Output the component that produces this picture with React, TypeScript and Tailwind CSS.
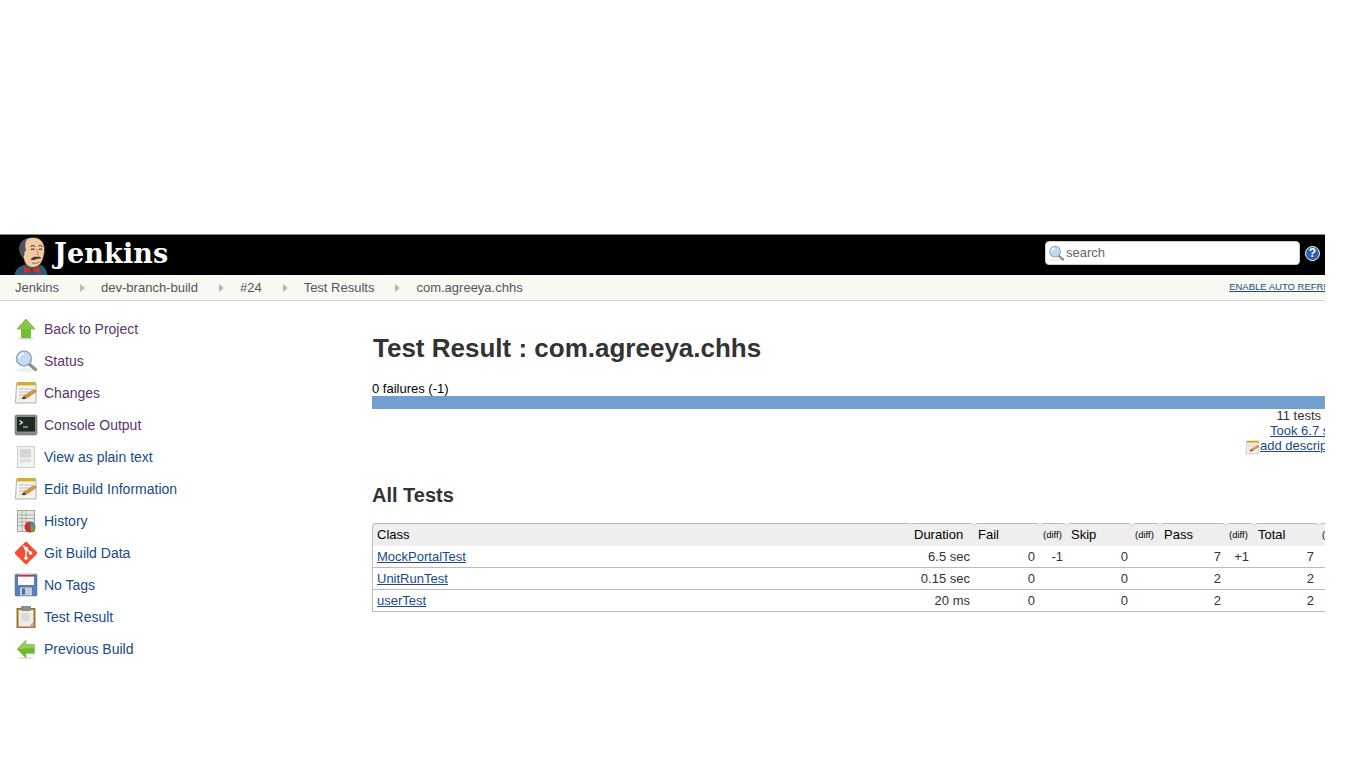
const visited = "text-[#5c3566]";
const link = "text-[#204a87]";

function ArrowUp() {
  return (
    <svg width="24" height="24" viewBox="0 0 24 24">
      <ellipse cx="12" cy="21.5" rx="8" ry="1.5" fill="#ddd" />
      <path d="M12 2 21 12H16.5V20.5H7.5V12H3Z" fill="#73c02e" stroke="#5a9a1e" strokeWidth="0.6" />
      <path d="M12 2 21 12H3Z" fill="#8ac44a" />
    </svg>
  );
}

function ArrowLeft() {
  return (
    <svg width="24" height="24" viewBox="0 0 24 24">
      <ellipse cx="12" cy="21" rx="8" ry="1.5" fill="#e4e4e4" />
      <path d="M3 12 12 3V7.5H20.5V16.5H12V21Z" fill="#72b52f" stroke="#8fc05f" strokeWidth="0.6" />
      <path d="M3 12 12 3V7.5H20.5V11Z" fill="#96cb5c" />
    </svg>
  );
}

function Magnifier({ size = 24 }: { size?: number }) {
  return (
    <svg width={size} height={size} viewBox="0 0 24 24">
      <ellipse cx="11" cy="21" rx="9" ry="2" fill="#eee" />
      <path d="M15 15 21.5 20.5" stroke="#8d8d8d" strokeWidth="3.2" strokeLinecap="round" />
      <circle cx="10" cy="9.5" r="7.5" fill="#c4daf2" stroke="#9aa9b8" strokeWidth="1.6" />
      <path d="M5 9a5 5 0 0 1 5-4.5" stroke="#fff" strokeWidth="1.6" fill="none" />
    </svg>
  );
}

function Notepad({ size = 24 }: { size?: number }) {
  return (
    <svg width={size} height={size} viewBox="0 0 24 24">
      <path d="M2.5 2.5H22V22H1.5Z" fill="#f3f3f0" stroke="#a8a8a3" strokeWidth="0.9" />
      <rect x="3" y="1" width="18.5" height="3.4" fill="#d9a92e" />
      <path d="M5 8H19M5 11H16M5 14H12M5 17H10" stroke="#c4c4c4" strokeWidth="1" />
      <path d="M8 18 10 15 20 8.5 22.5 10.5 12 17.5Z" fill="#e09a32" stroke="#8a5a1a" strokeWidth="0.5" />
      <path d="M8 18 10 15 12 17.5Z" fill="#40352a" />
    </svg>
  );
}

function Terminal() {
  return (
    <svg width="24" height="24" viewBox="0 0 24 24">
      <rect x="1" y="2" width="22" height="20" rx="2" fill="#8a8c88" stroke="#6d6f6b" strokeWidth="0.6" />
      <rect x="3" y="4" width="18" height="14.5" fill="#1e2a22" />
      <path d="M5.5 7.5 8.5 9.5 5.5 11.5" stroke="#eee" strokeWidth="1.1" fill="none" />
      <path d="M9 14H14" stroke="#ddd" strokeWidth="1" />
    </svg>
  );
}

function PlainText() {
  return (
    <svg width="24" height="24" viewBox="0 0 24 24">
      <rect x="3.5" y="1.5" width="17" height="21" fill="#f2f2f2" stroke="#cfcfcf" />
      <rect x="6" y="4" width="11" height="8.5" fill="#d4d4d4" />
      <rect x="6" y="14" width="11" height="3.5" fill="#dddddd" />
    </svg>
  );
}

function History() {
  return (
    <svg width="24" height="24" viewBox="0 0 24 24">
      <rect x="3.5" y="1.5" width="17" height="21" fill="#e8e8e4" stroke="#a5a5a0" />
      <path d="M4 6H20M4 9.5H20M4 13H20M4 16.5H20M8 2V22M12 2V22" stroke="#a8a8a3" strokeWidth="0.9" />
      <circle cx="16" cy="18" r="5.5" fill="#c9302a" />
      <path d="M16 18V13a5 5 0 0 1 4.8 4Z" fill="#4a86c8" />
      <path d="M16 18 20.8 17A5 5 0 0 1 17 22.8Z" fill="#66a832" />
    </svg>
  );
}

function GitIcon() {
  return (
    <svg width="24" height="24" viewBox="0 0 24 24">
      <rect x="3.6" y="3.6" width="16.8" height="16.8" rx="1.6" transform="rotate(45 12 12)" fill="#f05133" />
      <path d="M9 4.5 15.5 11M12 7.5V17.5M12 7.5 16.5 12" stroke="#fff" strokeWidth="1.5" fill="none" />
      <circle cx="12" cy="7.5" r="1.8" fill="#fff" />
      <circle cx="12" cy="17" r="1.8" fill="#fff" />
      <circle cx="16.5" cy="12" r="1.8" fill="#fff" />
    </svg>
  );
}

function Floppy() {
  return (
    <svg width="24" height="24" viewBox="0 0 24 24">
      <rect x="1" y="1" width="22" height="22" rx="1.5" fill="#5a7fb8" stroke="#4a6a9c" strokeWidth="0.5" />
      <rect x="4" y="1.5" width="16" height="10.5" fill="#fafafa" />
      <rect x="4" y="2" width="16" height="1.6" fill="#c9302a" />
      <rect x="6" y="14.5" width="12" height="8" fill="#c4ccd8" />
      <rect x="8" y="15.5" width="3" height="6" fill="#4a6a9c" />
    </svg>
  );
}

function Clipboard() {
  return (
    <svg width="24" height="24" viewBox="0 0 24 24">
      <rect x="2.5" y="3" width="19" height="20" fill="#a9702a" />
      <rect x="4.5" y="5" width="15" height="16.5" fill="#ececea" />
      <path d="M15 21.5 19.5 17V21.5Z" fill="#aaa" />
      <rect x="7" y="1" width="10" height="5" rx="1" fill="#8d8d88" />
      <rect x="7.5" y="8" width="8" height="8" fill="#dcdcda" />
    </svg>
  );
}

// butler head, drawn to fit the 40px header
function JenkinsHead() {
  return (
    <svg width="36" height="38" viewBox="0 0 36 38">
      <path d="M0.5 38C1.5 32 5 29 11 27.5L26 27.5C30 29 32.5 32 33.5 38Z" fill="#2f5a78" />
      <path d="M7 11C7 4 12 0.5 19 0.5 26 0.5 30.5 5 30.5 12 30.5 16 30 20 28 24 26 28.5 22 31 18 30.5 13 30 10.5 26 9.5 21 7.5 19.5 6.5 15 7 11Z" fill="#f2c9a2" stroke="#3a2a20" strokeWidth="0.7" />
      <path d="M9 21C5.5 18 4 12 6 7 7.5 3.5 11 1.5 14 1 10.5 5 11 10 12 13.5 11 13.5 10 15.5 10.5 18Z" fill="#50545a" />
      <path d="M16.5 9.5Q19 7.5 21 9.5M24.5 9Q26.5 7.5 28.5 9.5" stroke="#3a2a20" strokeWidth="1" fill="none" />
      <path d="M17 12.5Q19 11.5 20.5 12.5M25 12.5Q26.5 11.5 28 12.5" stroke="#222" strokeWidth="1.2" fill="none" />
      <path d="M22.5 12 24.5 17.5 22.5 18" stroke="#9a6a4a" strokeWidth="0.7" fill="none" />
      <path d="M16.5 22.5Q20 18.5 23 20 25.5 18.5 27.5 21.5 24 21 21.5 22.5 19 23.5 16.5 22.5Z" fill="#4a3a30" />
      <path d="M18 26Q22 27.5 25.5 25" stroke="#8a5a40" strokeWidth="0.8" fill="none" />
      <path d="M10 29.5 18 33 25 29.5 26 36.5 18 34 9.5 37Z" fill="#d32f2a" />
      <circle cx="18" cy="33.5" r="1.6" fill="#a81c18" />
    </svg>
  );
}

function Help() {
  return (
    <div className="flex h-[15px] w-[15px] items-center justify-center rounded-full border border-white bg-[#2f62a8] text-[12px] font-bold leading-none text-white">
      ?
    </div>
  );
}

const sideItems = [
  { label: "Back to Project", icon: <ArrowUp />, color: visited },
  { label: "Status", icon: <Magnifier />, color: visited },
  { label: "Changes", icon: <Notepad />, color: visited },
  { label: "Console Output", icon: <Terminal />, color: visited },
  { label: "View as plain text", icon: <PlainText />, color: link },
  { label: "Edit Build Information", icon: <Notepad />, color: link },
  { label: "History", icon: <History />, color: link },
  { label: "Git Build Data", icon: <GitIcon />, color: link },
  { label: "No Tags", icon: <Floppy />, color: link },
  { label: "Test Result", icon: <Clipboard />, color: link },
  { label: "Previous Build", icon: <ArrowLeft />, color: link },
];

const crumbs = ["Jenkins", "dev-branch-build", "#24", "Test Results", "com.agreeya.chhs"];

const rows = [
  { name: "MockPortalTest", duration: "6.5 sec", fail: "0", failDiff: "-1", skip: "0", pass: "7", passDiff: "+1", total: "7" },
  { name: "UnitRunTest", duration: "0.15 sec", fail: "0", failDiff: "", skip: "0", pass: "2", passDiff: "", total: "2" },
  { name: "userTest", duration: "20 ms", fail: "0", failDiff: "", skip: "0", pass: "2", passDiff: "", total: "2" },
];

function HeadCell({ label, diff, inset }: { label: string; diff?: boolean; inset?: boolean }) {
  return (
    <th className={`h-[23px] rounded-t-[4px] border-t border-t-[#bbb] bg-[#eeeeee] p-0 text-left align-middle font-normal text-black ${diff ? "pl-[3px] text-[9.5px]" : inset ? "pl-[5px] text-[13px]" : "pl-1 text-[13px]"}`}>
      {label}
    </th>
  );
}

const cell = "border-b border-[#bbb] p-0 pr-1 text-right";
const cellWide = "border-b border-[#bbb] p-0 pr-[5px] text-right";

export default function App() {
  return (
    <div className="min-h-[768px] w-[1325px] overflow-hidden bg-white font-['Liberation_Sans',Arial,sans-serif] text-[13px] text-[#333]">
      <div className="h-[234px]" />

      <header className="flex h-[41px] items-center border-t border-[#888] bg-black">
        <div className="ml-[14px] mt-[2px] h-[38px] w-[36px] self-start">
          <JenkinsHead />
        </div>
        <span className="ml-[4px] mt-[-3px] font-['DejaVu_Serif',Georgia,serif] text-[27px] font-bold leading-none tracking-[0.15px] text-white">
          Jenkins
        </span>
        <div className="ml-auto mt-[-4px] flex items-center gap-[5px] pr-[5px]">
          <div className="flex h-[24px] w-[255px] items-center gap-px rounded-[4px] border border-[#ccc] bg-white pl-[2px] text-[13px] text-[#666]">
            <Magnifier size={17} />
            <span>search</span>
          </div>
          <Help />
        </div>
      </header>

      <nav className="flex h-[26px] items-center border-b border-[#d3d7cf] bg-[#f6faf2] pl-[15px]">
        {crumbs.map((c, i) => (
          <div key={c} className="flex items-center">
            <span className="text-[13px] text-[#555]">{c}</span>
            {i < crumbs.length - 1 && (
              <span className="ml-[21px] mr-[16px] h-0 w-0 border-y-[4px] border-l-[5px] border-y-transparent border-l-[#bbb]" />
            )}
          </div>
        ))}
        <span className="ml-auto shrink-0 translate-x-[18px] whitespace-nowrap text-[9.5px] text-[#204a87] underline">
          ENABLE AUTO REFRESH
        </span>
      </nav>

      <div className="flex">
        <aside className="w-[372px] shrink-0 pl-[14px] pt-[12px]">
          {sideItems.map((item) => (
            <div key={item.label} className="flex h-[32px] items-center gap-[6px]">
              <div className="h-[24px] w-[24px] shrink-0">{item.icon}</div>
              <span className={`text-[14px] ${item.color}`}>{item.label}</span>
            </div>
          ))}
        </aside>

        <main className="min-w-0 flex-1 overflow-hidden">
          <h1 className="ml-px mt-[30px] text-[26px] font-bold leading-[34px] text-[#333]">
            Test Result : com.agreeya.chhs
          </h1>

          <div className="mt-[16px] h-[15px] text-[13px] leading-[16px] text-black">0 failures (-1)</div>
          <div className="h-[13px] w-full bg-[#729fcf]" />

          <div className="flex flex-col items-end text-[13px]">
            <div className="h-[14px] whitespace-nowrap pr-[4px] leading-[14px]">11 tests</div>
            <div className="h-[15px] w-[55px] overflow-hidden whitespace-nowrap leading-[16px] text-[#204a87] underline">Took 6.7 sec.</div>
            <div className="flex h-[17px] w-[80px] items-start overflow-hidden whitespace-nowrap">
              <div className="mt-[2px] h-[15px] w-[15px] shrink-0">
                <Notepad size={15} />
              </div>
              <span className="leading-[16px] text-[#204a87] underline">add description</span>
            </div>
          </div>

          <h2 className="mt-[28px] text-[20px] font-bold leading-[24px] text-[#333]">All Tests</h2>

          <table className="mt-[16px] w-[1000px] table-fixed border-separate border-spacing-0 text-[13px]">
            <colgroup>
              <col className="w-[537px]" />
              <col className="w-[65px]" />
              <col className="w-[66px]" />
              <col className="w-[27px]" />
              <col className="w-[65px]" />
              <col className="w-[28px]" />
              <col className="w-[66px]" />
              <col className="w-[28px]" />
              <col className="w-[65px]" />
              <col className="w-[53px]" />
            </colgroup>
            <thead>
              <tr>
                <th className="h-[23px] rounded-tl-[4px] border-t border-l border-[#bbb] bg-[#eeeeee] p-0 pl-1 text-left align-middle text-[13px] font-normal text-black">Class</th>
                <HeadCell label="Duration" inset />
                <HeadCell label="Fail" />
                <HeadCell label="(diff)" diff />
                <HeadCell label="Skip" />
                <HeadCell label="(diff)" diff />
                <HeadCell label="Pass" />
                <HeadCell label="(diff)" diff />
                <HeadCell label="Total" />
                <HeadCell label="(diff)" diff />
              </tr>
            </thead>
            <tbody>
              {rows.map((r) => (
                <tr key={r.name} className="h-[22px]">
                  <td className="border-b border-l border-[#bbb] p-0 pl-1 text-[#204a87] underline">{r.name}</td>
                  <td className={cell}>{r.duration}</td>
                  <td className={cellWide}>{r.fail}</td>
                  <td className={cell}>{r.failDiff}</td>
                  <td className={cell}>{r.skip}</td>
                  <td className={cell} />
                  <td className={cellWide}>{r.pass}</td>
                  <td className={cellWide}>{r.passDiff}</td>
                  <td className={cellWide}>{r.total}</td>
                  <td className={cell} />
                </tr>
              ))}
            </tbody>
          </table>
        </main>
      </div>
    </div>
  );
}
